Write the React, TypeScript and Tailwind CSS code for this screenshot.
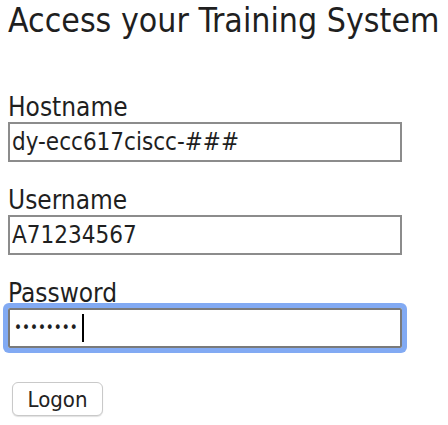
export default function App() {
  return (
    <div className="min-h-screen bg-white px-2 text-[#1f1f1f] font-['DejaVu_Sans_Condensed','DejaVu_Sans',sans-serif]">
      <h1 className="mt-[1px] whitespace-nowrap text-[33.6px] leading-[39px] font-normal">Access your Training System</h1>

      <form className="mt-[52px] flex flex-col" onSubmit={(e) => e.preventDefault()}>
        <label className="block text-[26px] leading-[30px]">Hostname</label>
        <input
          type="text"
          defaultValue="dy-ecc617ciscc-###"
          className="h-10 w-[394px] border-2 border-[#8c8c8c] px-[2px] text-[24px] outline-none"
        />

        <label className="mt-[23px] block text-[26px] leading-[30px]">Username</label>
        <input
          type="text"
          defaultValue="A71234567"
          className="h-10 w-[394px] border-2 border-[#8c8c8c] px-[2px] text-[24px] outline-none"
        />

        <label className="mt-[23px] block text-[26px] leading-[30px]">Password</label>
        <div className="relative w-[394px]">
          <input
            type="password"
            defaultValue="12345678"
            className="h-10 w-full rounded-[2px] border-2 border-[#7a7a7a] px-[4px] text-[15px] caret-transparent outline-none shadow-[0_0_0_5px_#82aaf3]"
          />
          <span className="absolute left-[74px] top-[6px] h-[28px] w-[2px] bg-black" />
        </div>

        <div className="mt-[34px]">
          <button
            type="submit"
            className="ml-1 h-[34px] w-[91px] rounded-md border border-[#c9c9c9] bg-white text-[22px] text-[#222] shadow-[0_1px_1px_rgba(0,0,0,0.12)]"
          >
            Logon
          </button>
        </div>
      </form>
    </div>
  );
}
